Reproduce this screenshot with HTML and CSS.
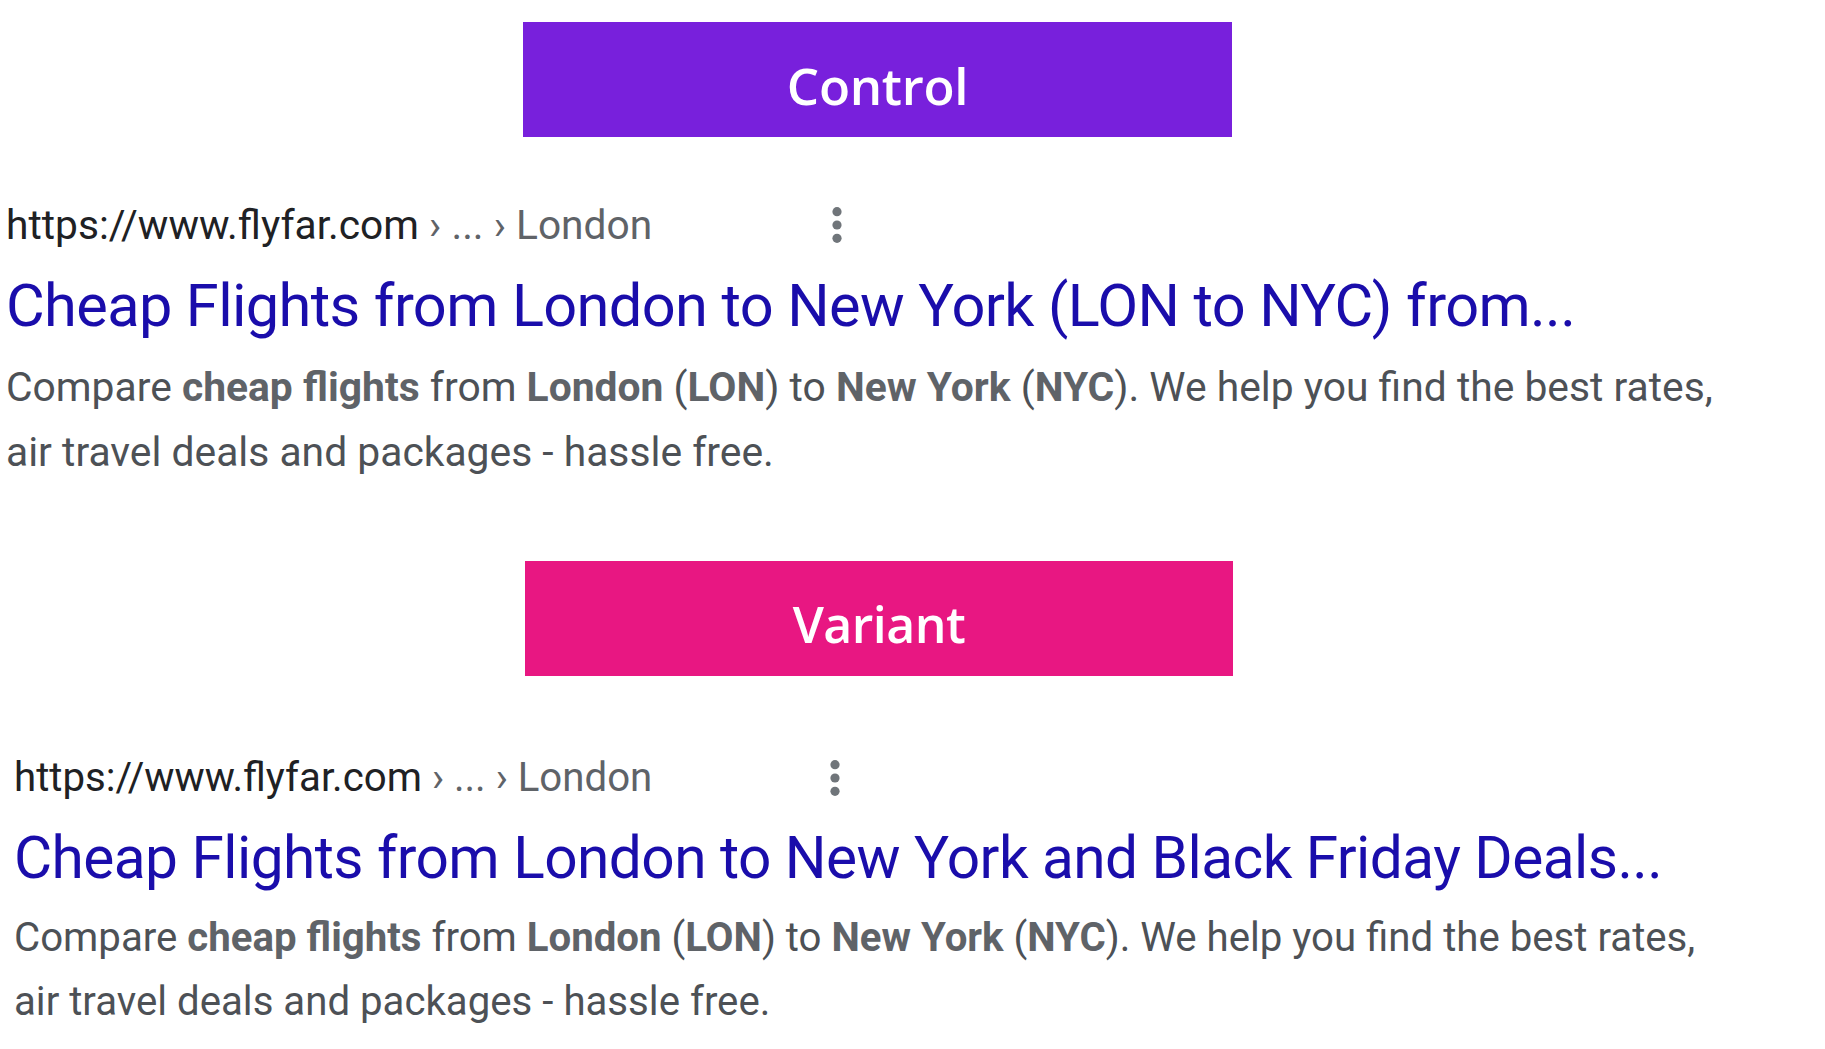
FILE: index.html
```html
<!DOCTYPE html>
<html lang="en">
<head>
<meta charset="utf-8">
<title>Control vs Variant</title>
<link rel="stylesheet" href="styles.css">
</head>
<body>
<main class="page">
  <section class="test test--control">
    <div class="label label--control">Control</div>
    <article class="result">
      <div class="result__cite">
        <cite class="cite"><span class="cite__host">https://www.flyfar.com</span><span class="cite__path"> › ... › London</span></cite>
        <svg class="more" viewBox="0 0 30 48" aria-hidden="true"><circle cx="15" cy="10.7" r="4.6"/><circle cx="15" cy="24" r="4.6"/><circle cx="15" cy="37.3" r="4.6"/></svg>
      </div>
      <h3 class="result__title">Cheap Flights from London to New York (LON to NYC) from...</h3>
      <p class="result__snippet">Compare <b>cheap flights</b> from <b>London</b> (<b>LON</b>) to <b>New York</b> (<b>NYC</b>). We help you find the best rates, air travel deals and packages - hassle free.</p>
    </article>
  </section>
  <section class="test test--variant">
    <div class="label label--variant">Variant</div>
    <article class="result">
      <div class="result__cite">
        <cite class="cite"><span class="cite__host">https://www.flyfar.com</span><span class="cite__path"> › ... › London</span></cite>
        <svg class="more" viewBox="0 0 30 48" aria-hidden="true"><circle cx="15" cy="10.7" r="4.6"/><circle cx="15" cy="24" r="4.6"/><circle cx="15" cy="37.3" r="4.6"/></svg>
      </div>
      <h3 class="result__title">Cheap Flights from London to New York and Black Friday Deals...</h3>
      <p class="result__snippet">Compare <b>cheap flights</b> from <b>London</b> (<b>LON</b>) to <b>New York</b> (<b>NYC</b>). We help you find the best rates, air travel deals and packages - hassle free.</p>
    </article>
  </section>
</main>
</body>
</html>
```
FILE: styles.css
```css
* { box-sizing: border-box; margin: 0; padding: 0; }

html, body { background: #ffffff; }

body {
  font-family: Roboto, "Liberation Sans", Arial, sans-serif;
  overflow: hidden;
}

.page {
  display: flex;
  flex-direction: column;
}

.test {
  display: flex;
  flex-direction: column;
}

.test--control { margin-top: 22px; }
.test--variant { margin-top: 76px; }

/* Banner labels */
.label {
  height: 115px;
  display: flex;
  justify-content: center;
  align-items: flex-start;
  color: #ffffff;
  font-family: "Open Sans", "Noto Sans", sans-serif;
  font-weight: 600;
  line-height: 52px;
}

.label--control {
  width: 709px;
  margin-left: 523px;
  padding-top: 37px;
  font-size: 51px;
  letter-spacing: -0.3px;
  background: #7820dc;
}

.label--variant {
  width: 708px;
  margin-left: 525px;
  padding-top: 37px;
  font-size: 50px;
  letter-spacing: -0.5px;
  background: #e81782;
}

/* Search result */
.result {
  display: flex;
  flex-direction: column;
}

.test--control .result { margin: 64px 0 0 6px; width: 1740px; }
.test--variant .result { margin: 78px 0 0 14px; width: 1720px; }

.result__cite {
  display: flex;
  align-items: center;
  justify-content: space-between;
}

.test--control .result__cite { width: 846px; height: 48px; }
.test--variant .result__cite { width: 836px; height: 47px; }

.cite {
  font-style: normal;
  white-space: nowrap;
}

.test--control .cite { font-size: 40.7px; line-height: 48px; }
.test--variant .cite { font-size: 40.2px; line-height: 47px; }

.cite__host { color: #202124; }
.cite__path { color: #5f6368; }

.more {
  width: 30px;
  height: 48px;
  fill: #70757a;
  flex: none;
}

.result__title {
  color: #1a0dab;
  font-weight: 400;
  white-space: nowrap;
}

.test--control .result__title { margin-top: 22px; font-size: 59.5px; line-height: 70px; letter-spacing: -0.62px; }
.test--variant .result__title { margin-top: 23px; font-size: 58.6px; line-height: 69px; letter-spacing: -0.56px; }

.result__snippet {
  color: #4d5156;
}

.result__snippet b {
  color: #5f6368;
  font-weight: 700;
}

.test--control .result__snippet { margin-top: 14px; font-size: 40.8px; line-height: 65px; }
.test--variant .result__snippet { margin-top: 13px; font-size: 40.2px; line-height: 64.4px; }
```
